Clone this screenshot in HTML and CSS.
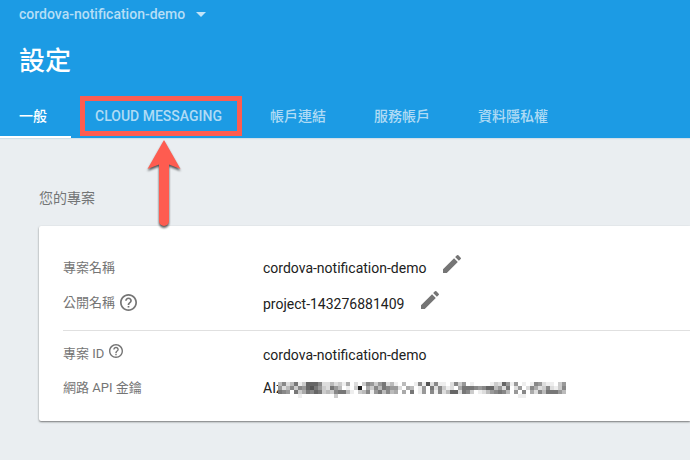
FILE: index.html
```
<!DOCTYPE html>
<html lang="zh-Hant">
<head>
<meta charset="utf-8">
<title>設定</title>
<link rel="stylesheet" href="styles.css">
</head>
<body>
<header class="header">
  <div class="project"><span>cordova-notification-demo</span><i class="caret"></i></div>
  <h1 class="title">設定</h1>
  <nav class="tabs">
    <a class="tab active">一般</a>
    <a class="tab cloud">CLOUD MESSAGING</a>
    <a class="tab">帳戶連結</a>
    <a class="tab">服務帳戶</a>
    <a class="tab">資料隱私權</a>
  </nav>
</header>
<main class="main">
  <h2 class="subtitle">您的專案</h2>
  <section class="card">
    <div class="row name"><span class="label">專案名稱</span><span class="value">cordova-notification-demo</span>
      <svg class="pencil" viewBox="0 0 24 24"><path d="M3 17.25V21h3.75L17.81 9.94l-3.75-3.75L3 17.25zM20.71 7.04a1 1 0 0 0 0-1.41l-2.34-2.34a1 1 0 0 0-1.41 0l-1.83 1.83 3.75 3.75 1.83-1.83z"/></svg></div>
    <div class="row public"><span class="label">公開名稱<svg class="help" viewBox="2 2 20 20"><path d="M11 18h2v-2h-2v2zm1-16C6.48 2 2 6.48 2 12s4.48 10 10 10 10-4.48 10-10S17.52 2 12 2zm0 18c-4.41 0-8-3.59-8-8s3.59-8 8-8 8 3.59 8 8-3.59 8-8 8zm0-14c-2.21 0-4 1.79-4 4h2c0-1.1.9-2 2-2s2 .9 2 2c0 2-3 1.75-3 5h2c0-2.25 3-2.5 3-5 0-2.21-1.79-4-4-4z"/></svg></span><span class="value">project-143276881409</span>
      <svg class="pencil" viewBox="0 0 24 24"><path d="M3 17.25V21h3.75L17.81 9.94l-3.75-3.75L3 17.25zM20.71 7.04a1 1 0 0 0 0-1.41l-2.34-2.34a1 1 0 0 0-1.41 0l-1.83 1.83 3.75 3.75 1.83-1.83z"/></svg></div>
    <hr class="divider">
    <div class="row pid"><span class="label">專案 ID<svg class="help small" viewBox="2 2 20 20"><path d="M11 18h2v-2h-2v2zm1-16C6.48 2 2 6.48 2 12s4.48 10 10 10 10-4.48 10-10S17.52 2 12 2zm0 18c-4.41 0-8-3.59-8-8s3.59-8 8-8 8 3.59 8 8-3.59 8-8 8zm0-14c-2.21 0-4 1.79-4 4h2c0-1.1.9-2 2-2s2 .9 2 2c0 2-3 1.75-3 5h2c0-2.25 3-2.5 3-5 0-2.21-1.79-4-4-4z"/></svg></span><span class="value">cordova-notification-demo</span></div>
    <div class="row key"><span class="label">網路 API 金鑰</span><span class="value">AIz</span><svg class="mosaic" width="288" height="16" shape-rendering="crispEdges"></svg></div>
  </section>
</main>
<div class="highlight"></div>
<svg class="arrow" width="44" height="100" viewBox="0 0 44 100"><path d="M22 4L38.5 33L27 28.5V85a5 5 0 0 1-10 0V28.5L5.5 33Z"/></svg>
<script src="mosaic.js"></script>
</body>
</html>
```
FILE: styles.css
```
* { box-sizing: border-box; }
body {
  margin: 0;
  width: 690px;
  height: 460px;
  overflow: hidden;
  position: relative;
  background: #eaeef1;
  font: 14px/20px Roboto, "Noto Sans CJK TC", sans-serif;
  color: #212121;
}
.header {
  height: 138px;
  background: #1c9be4;
  color: #fff;
  display: flex;
  flex-direction: column;
  box-shadow: 0 1px 1px #d0dfe9;
}
.project {
  display: flex;
  align-items: center;
  height: 20px;
  margin: 4px 0 0 19px;
  font-weight: 500;
  color: #b5def6;
}
.caret {
  margin-left: 11px;
  border: 5px solid transparent;
  border-top-color: #c2e4f8;
  border-bottom: 0;
}
.title {
  margin: 18px 0 0 19px;
  font-size: 26px;
  line-height: 38px;
  font-weight: 500;
}
.tabs {
  display: flex;
  margin-top: auto;
  height: 44px;
}
.tab {
  padding: 12px 24px 0;
  font-weight: 500;
  color: #b0dbf5;
}
.tab.active {
  width: 71px;
  padding-left: 19px;
  color: #fff;
  border-bottom: 2px solid #fff;
}
.tab.cloud { width: 175px; }
.main { padding: 50px 0 0 39px; }
.subtitle {
  margin: 0;
  font-size: 14px;
  line-height: 20px;
  font-weight: 400;
  color: #737576;
}
.card {
  height: 195px;
  margin-top: 18px;
  padding: 24px 0 0 24px;
  background: #fff;
  border-radius: 2px 0 0 2px;
  box-shadow: 0 1px 2px rgba(0, 0, 0, .5);
}
.row { display: flex; align-items: center; height: 36px; }
.label {
  display: flex;
  align-items: center;
  width: 200px;
  font-size: 13px;
  color: #757575;
}
.pencil { width: 24px; height: 24px; margin: -8px 0 0 14px; fill: #757575; }
.public { height: 34px; }
.public .label { margin-top: -1px; }
.public .value { margin-top: 2px; }
.public .pencil { margin-top: -6px; }
.help { width: 17px; height: 17px; margin: -1px 0 0 5px; fill: #757575; }
.help.small { width: 14px; height: 14px; margin: -5px 0 0 5px; }
.divider { margin: 10px 0 0; border: 0; border-top: 1px solid #e0e0e0; }
.pid { height: 34px; margin-top: 7px; }
.pid .label { margin-top: -3px; }
.key { height: 34px; margin-top: -1px; }
.key .value { width: 15px; white-space: nowrap; }
.mosaic { margin-top: 4px; }
.highlight {
  position: absolute;
  left: 80px;
  top: 96px;
  width: 162px;
  height: 40px;
  border: 5px solid #fe5c50;
}
.arrow {
  position: absolute;
  left: 142px;
  top: 136px;
  fill: #fe5c50;
  filter: drop-shadow(0 2px 1px rgba(0, 0, 0, .65));
}
```
FILE: mosaic.js
```
// Grey level of every 4px cell in the redacted key, one hex digit per cell.
const rows = [
  "b8db7ec6668ddbdceafdfc89c97dbefbffe8e5d8eefd8c9feffffecd69e9fefe89deefc9",
  "9db8c896579cd79bfefc2fac8b7899dfabfe9f7d8cedfa77789866b9d7fd9fd8adc8dec8",
  "789f7ca7867cbc877befcb8e97b8bafaf7fe9f8e8db66d78cfedb9878bf9f8fad8b7779b",
  "fffffeffffffffcfffffffffffffffffffffffffffffffffffffffffffffeeffffffffff"
];
const svg = document.querySelector(".mosaic");
rows.forEach((row, y) => [...row].slice(0, 72).forEach((c, x) => {
  if (c === "f") return;
  const r = document.createElementNS("http://www.w3.org/2000/svg", "rect");
  r.setAttribute("x", x * 4);
  r.setAttribute("y", y * 4);
  r.setAttribute("width", 4);
  r.setAttribute("height", 4);
  r.setAttribute("fill", "#" + c + c + c);
  svg.appendChild(r);
}));
```
